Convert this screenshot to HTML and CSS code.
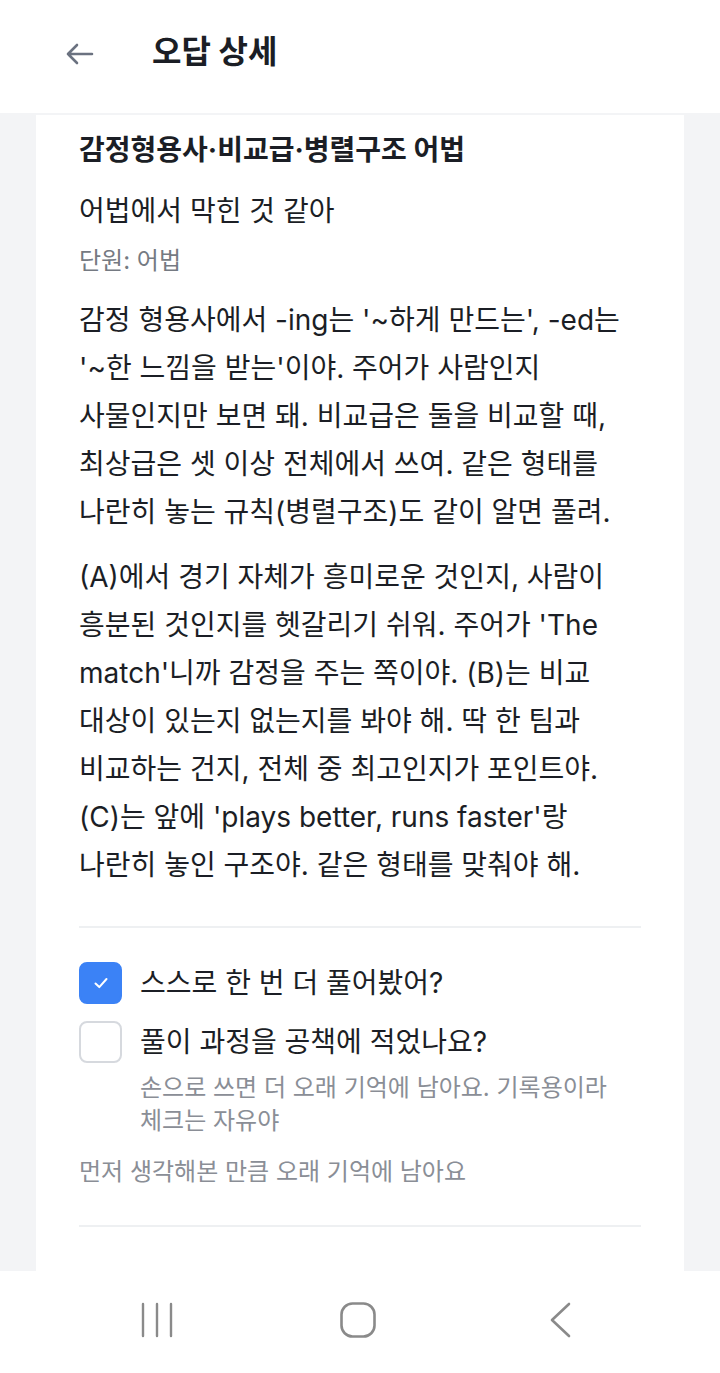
FILE: index.html
```html
<!DOCTYPE html>
<html lang="ko">
<head>
    <meta charset="UTF-8">
    <title>오답 상세</title>
    <meta name="viewport" content="width=device-width, initial-scale=1.0">
    <link rel="stylesheet" href="styles.css">
</head>
<body>
    <div class="screen">
        <header class="topbar">
            <button class="back" aria-label="뒤로">
                <svg width="30" height="24" viewBox="0 0 30 24">
                    <path d="M28 12H4M13 3L4 12l9 9" stroke="#6b7280" stroke-width="2.6" fill="none" stroke-linecap="round" stroke-linejoin="round"/>
                </svg>
            </button>
            <h1>오답 상세</h1>
        </header>

        <main class="content">
            <section class="card">
                <h2 class="topic">감정형용사·비교급·병렬구조 어법</h2>
                <p class="reason">어법에서 막힌 것 같아</p>
                <p class="unit">단원: 어법</p>

                <p class="explain">감정 형용사에서 -ing는 '~하게 만드는', -ed는 '~한 느낌을 받는'이야. 주어가 사람인지 사물인지만 보면 돼. 비교급은 둘을 비교할 때, 최상급은 셋 이상 전체에서 쓰여. 같은 형태를 나란히 놓는 규칙(병렬구조)도 같이 알면 풀려.</p>
                <p class="explain">(A)에서 경기 자체가 흥미로운 것인지, 사람이 흥분된 것인지를 헷갈리기 쉬워. 주어가 'The match'니까 감정을 주는 쪽이야. (B)는 비교 대상이 있는지 없는지를 봐야 해. 딱 한 팀과 비교하는 건지, 전체 중 최고인지가 포인트야. (C)는 앞에 'plays better, runs faster'랑 나란히 놓인 구조야. 같은 형태를 맞춰야 해.</p>

                <div class="divider"></div>

                <div class="checks">
                    <label class="check">
                        <span class="box checked">
                            <svg width="18" height="14" viewBox="0 0 18 14">
                                <path d="M3.5 7.5l3.8 3.6L14.5 3" stroke="#fff" stroke-width="2" fill="none" stroke-linecap="round" stroke-linejoin="round"/>
                            </svg>
                        </span>
                        <span class="check-text">스스로 한 번 더 풀어봤어?</span>
                    </label>
                    <label class="check">
                        <span class="box"></span>
                        <span class="check-text">풀이 과정을 공책에 적었나요?</span>
                    </label>
                    <p class="check-hint">손으로 쓰면 더 오래 기억에 남아요. 기록용이라 체크는 자유야</p>
                </div>

                <p class="note">먼저 생각해본 만큼 오래 기억에 남아요</p>

                <div class="divider bottom"></div>
            </section>
        </main>

        <nav class="sysnav">
            <svg width="34" height="36" viewBox="0 0 34 36">
                <path d="M3 2v32M17 2v32M31 2v32" stroke="#8a8a8a" stroke-width="2.4" stroke-linecap="round"/>
            </svg>
            <svg width="38" height="38" viewBox="0 0 38 38">
                <rect x="2.5" y="2.5" width="33" height="33" rx="11" stroke="#8a8a8a" stroke-width="2.6" fill="none"/>
            </svg>
            <svg width="26" height="38" viewBox="0 0 26 38">
                <path d="M22 3L5 19l17 16" stroke="#8a8a8a" stroke-width="2.6" fill="none" stroke-linecap="round" stroke-linejoin="round"/>
            </svg>
        </nav>
    </div>
</body>
</html>
```

FILE: styles.css
```css
:root {
    --text: #1b1e25;
    --muted: #757a82;
    --hint: #8a8e96;
    --line: #eef0f2;
    --blue: #3b82f6;
    --bg: #f3f4f6;
}
* {
    box-sizing: border-box;
}
body {
    margin: 0;
    font-family: Inter, "Noto Sans CJK KR", sans-serif;
    color: var(--text);
    background: var(--bg);
}
.screen {
    width: 720px;
    height: 1373px;
    display: flex;
    flex-direction: column;
    overflow: hidden;
}
.topbar {
    height: 113px;
    flex: none;
    background: #fff;
    display: flex;
    align-items: center;
    padding: 0 0 9px 64px;
    gap: 58px;
}
.back {
    border: none;
    background: none;
    padding: 0;
    display: flex;
    margin-top: 4px;
}
.topbar h1 {
    margin: 0;
    font-size: 32px;
    font-weight: 700;
    line-height: 40px;
}
.content {
    flex: 1;
    overflow: hidden;
    background: var(--bg);
    padding: 2px 36px 0;
}
.card {
    background: #fff;
    min-height: 100%;
    padding: 15px 43px 0;
    word-break: keep-all;
}
.topic {
    margin: 0;
    font-size: 28px;
    font-weight: 700;
    line-height: 40px;
}
.reason {
    margin: 21px 0 0;
    font-size: 28px;
    line-height: 40px;
}
.unit {
    margin: 13px 0 0;
    font-size: 24px;
    line-height: 34px;
    color: var(--muted);
}
.explain {
    margin: 18px 0 0;
    font-size: 28px;
    line-height: 48px;
}
.explain + .explain {
    margin-top: 17px;
}
.divider {
    height: 2px;
    background: var(--line);
    margin-top: 37px;
}
.checks {
    margin-top: 34px;
}
.check {
    display: flex;
    align-items: center;
    gap: 18px;
    margin-bottom: 17px;
}
.check + .check {
    margin-bottom: 8px;
}
.box {
    width: 43px;
    height: 42px;
    flex: none;
    border: 2px solid #d6d9de;
    border-radius: 8px;
    background: #fff;
    display: flex;
    align-items: center;
    justify-content: center;
}
.box.checked {
    background: var(--blue);
    border-color: var(--blue);
}
.check-text {
    font-size: 28px;
    line-height: 40px;
}
.check-hint {
    margin: 0 0 0 61px;
    font-size: 24px;
    line-height: 33px;
    color: var(--hint);
}
.note {
    margin: 18px 0 0;
    font-size: 24px;
    line-height: 33px;
    color: var(--hint);
}
.divider.bottom {
    margin-top: 37px;
}
.sysnav {
    height: 102px;
    flex: none;
    background: #fff;
    display: grid;
    grid-template-columns: repeat(3, 1fr);
    justify-items: center;
    align-items: center;
    padding: 0 59px 4px 56px;
}
```
